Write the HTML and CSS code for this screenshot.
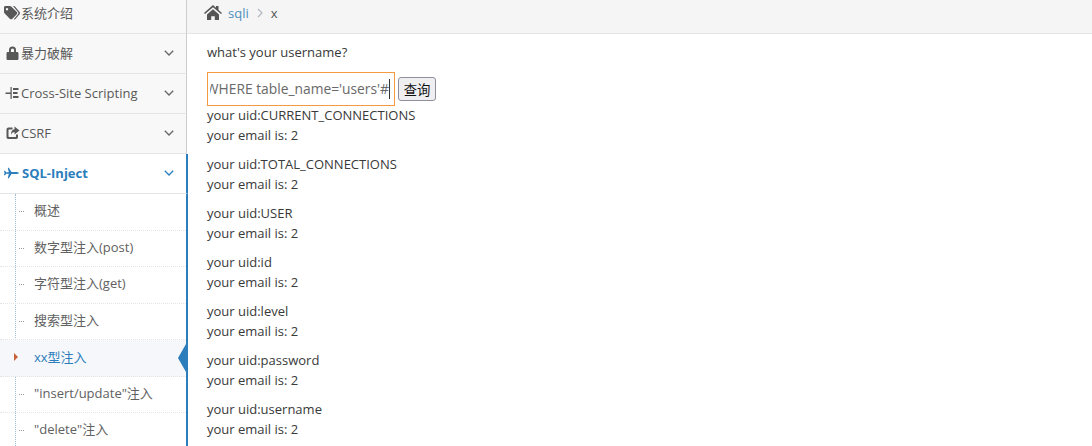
FILE: index.html
```html
<!DOCTYPE html>
<html lang="en">
<head>
  <meta charset="UTF-8" />
  <title>sqli</title>
  <link rel="stylesheet" href="styles.css">
</head>
<body>
  <div class="page">
    <ul class="sidebar">
      <li class="nav-item first">
        <svg class="nav-icon tag-icon" viewBox="0 0 16 14"><path d="M0 1.500C0 .7.600 0 1.500 0H6c.5 0 .9.200 1.200.5l5.600 5.600c.6.600.6 1.500 0 2.100l-4.700 4.700c-.6.600-1.500.6-2.100 0L.5 7.300C.2 7 0 6.600 0 6.100zM3 2a1.200 1.200 0 1 0 .01 0z" fill-rule="evenodd"/><path d="M9 0h1c.4 0 .8.200 1 .5l4.600 5.600c.5.600.5 1.500 0 2.100l-4.200 4.900c-.5.500-1.200.5-1.700.1l4.300-5c.5-.6.5-1.500 0-2.100z"/></svg>
        <span class="nav-text">系统介绍</span>
      </li>
      <li class="nav-item">
        <svg class="nav-icon" viewBox="0 0 14 14"><path d="M3.500 6V4a3.500 3.500 0 0 1 7 0v2h1.200c.7 0 1.300.6 1.300 1.300v5.400c0 .7-.6 1.300-1.300 1.300H2.300C1.600 14 1 13.400 1 12.700V7.300C1 6.600 1.600 6 2.300 6zM5.400 6h3.200V4a1.600 1.600 0 0 0-3.200 0z" fill-rule="evenodd"/></svg>
        <span class="nav-text">暴力破解</span>
        <svg class="chevron" viewBox="0 0 10 6"><path d="M.8.800 5 5 9.200.8"/></svg>
      </li>
      <li class="nav-item">
        <svg class="nav-icon" viewBox="0 0 14 14"><path d="M5 1h1.200v12H5V8H0V6.500h5zM7.500 2H13v2H7.500zM7.500 6H12v2H7.500zM7.500 10H13v2H7.500z"/></svg>
        <span class="nav-text">Cross-Site Scripting</span>
        <svg class="chevron" viewBox="0 0 10 6"><path d="M.8.800 5 5 9.200.8"/></svg>
      </li>
      <li class="nav-item">
        <svg class="nav-icon" viewBox="0 0 14 14"><path d="M3 1.500h4v2H3.500c-.3 0-.5.200-.5.5v6.500c0 .3.200.5.500.5h6.500c.3 0 .5-.2.500-.5V8.500h2v2.800c0 1-.8 1.700-1.700 1.700H2.700C1.700 13 1 12.300 1 11.300V3.500C1 2.400 1.900 1.500 3 1.500z"/><path d="M9 .5l5 4-5 4V6C7.300 6 6.200 6.800 5.500 9c-.3-3.500 1.200-5.500 3.500-5.800z"/></svg>
        <span class="nav-text">CSRF</span>
        <svg class="chevron" viewBox="0 0 10 6"><path d="M.8.800 5 5 9.200.8"/></svg>
      </li>
      <li class="nav-item open">
        <svg class="nav-icon" viewBox="0 0 14 10"><path d="M0 3h1l1 1.200h2.500L3.500 0h1L7 4h3.500C12.500 4 14 4.500 14 5s-1.500 1-3.500 1H7l-2.500 4h-1l1-4.200H2L1 7H0l.5-2z"/></svg>
        <span class="nav-text">SQL-Inject</span>
        <svg class="chevron" viewBox="0 0 10 6"><path d="M.8.800 5 5 9.200.8"/></svg>
      </li>
      <li>
        <ul class="submenu">
          <li class="sub-item">概述</li>
          <li class="sub-item">数字型注入(post)</li>
          <li class="sub-item">字符型注入(get)</li>
          <li class="sub-item">搜索型注入</li>
          <li class="sub-item current">xx型注入</li>
          <li class="sub-item">"insert/update"注入</li>
          <li class="sub-item">"delete"注入</li>
        </ul>
      </li>
    </ul>

    <div class="main">
      <div class="breadcrumb">
        <svg class="home-icon" viewBox="0 0 18 15"><path d="M9 0l3 2.700V1h2.500v3.900L18 8l-1 1.100L9 2.200 1 9.100 0 8z"/><path d="M3 9.500 9 4.200l6 5.300V15h-4.200v-3.800H7.200V15H3z"/></svg>
        <a class="crumb-link">sqli</a>
        <svg class="crumb-sep" viewBox="0 0 6 10"><path d="M1 1l4 4-4 4"/></svg>
        <span class="crumb-now">x</span>
      </div>
      <div class="content">
        <p class="question">what's your username?</p>
        <form class="query-form">
          <div class="fake-input"><div class="fake-clip"><span class="fake-value">WHERE table_name='users'#</span></div></div>
          <button type="button" class="query-btn">查询</button>
        </form>
        <p class="row">your uid:CURRENT_CONNECTIONS<br>your email is: 2</p>
        <p class="row">your uid:TOTAL_CONNECTIONS<br>your email is: 2</p>
        <p class="row">your uid:USER<br>your email is: 2</p>
        <p class="row">your uid:id<br>your email is: 2</p>
        <p class="row">your uid:level<br>your email is: 2</p>
        <p class="row">your uid:password<br>your email is: 2</p>
        <p class="row">your uid:username<br>your email is: 2</p>
      </div>
    </div>
  </div>
</body>
</html>
```

FILE: styles.css
```css
* {
  box-sizing: border-box;
}

html,
body {
  margin: 0;
  height: 446px;
  overflow: hidden;
}

body {
  font-family: "Open Sans", "Noto Sans CJK SC", sans-serif;
  font-size: 13px;
  line-height: 20px;
  color: #393939;
  background: #fff;
}

ul {
  list-style: none;
  margin: 0;
  padding: 0;
}

.page {
  display: flex;
  height: 446px;
  overflow: hidden;
}

.sidebar {
  position: relative;
  z-index: 1;
  width: 187px;
  flex: none;
  margin: -6px 0 0;
}

.nav-item {
  display: flex;
  align-items: center;
  height: 40px;
  padding: 0 0 2px 5px;
  background: #f8f8f8;
  color: #585858;
  border-bottom: 1px solid #e5e5e5;
  border-right: 1px solid #ccc;
}

.nav-icon {
  width: 15px;
  height: 14px;
  flex: none;
  fill: #585858;
}

.tag-icon {
  width: 16px;
  margin-left: -1px;
}

.nav-text {
  margin-left: 1px;
}

.chevron {
  width: 10px;
  height: 6px;
  margin-left: auto;
  margin-right: 12px;
  fill: none;
  stroke: #666;
  stroke-width: 1.3;
}

.nav-item.open {
  background: #fff;
  color: #2b7dbc;
  font-weight: 700;
  margin-right: -1px;
  border-right: 2px solid #2b7dbc;
  padding-left: 4px;
}

.nav-item.open .nav-icon {
  fill: #2b7dbc;
}

.nav-item.open .nav-text {
  margin-left: 3px;
}

.nav-item.open .chevron {
  stroke: #2b7dbc;
}

.submenu {
  position: relative;
  background: #fff;
  margin-right: -1px;
  border-right: 2px solid #2b7dbc;
}

.submenu::before {
  content: "";
  position: absolute;
  left: 15px;
  top: 0;
  bottom: 0;
  border-left: 1px dotted #9dbdd6;
}

.sub-item {
  position: relative;
  height: 36.5px;
  line-height: 33px;
  padding-left: 34px;
  color: #616161;
  border-bottom: 1px dotted #e4e4e4;
}

.sub-item::before {
  content: "";
  position: absolute;
  left: 19px;
  top: 17px;
  width: 5px;
  border-top: 1px dotted #9a9a9a;
}

.sub-item.current {
  background: #f5f7fa;
  color: #2b7dbc;
  line-height: 35px;
}

.sub-item.current::before {
  left: 14px;
  top: 13px;
  width: 0;
  border: 0;
  border-left: 4px solid #c86139;
  border-top: 4px solid transparent;
  border-bottom: 4px solid transparent;
}

.sub-item.current::after {
  content: "";
  position: absolute;
  right: 0;
  top: 4px;
  border: 14px solid transparent;
  border-left: 0;
  border-right: 8px solid #2b7dbc;
}

.main {
  flex: 1;
  min-width: 0;
}

.breadcrumb {
  display: flex;
  align-items: center;
  height: 34px;
  padding: 0 0 8px 17px;
  background: #f5f5f5;
  border-bottom: 1px solid #e5e5e5;
}

.home-icon {
  width: 18px;
  height: 15px;
  fill: #555;
}

.crumb-link {
  margin-left: 6px;
  color: #4c8fbd;
}

.crumb-sep {
  width: 6px;
  height: 10px;
  margin: 0 8px;
  fill: none;
  stroke: #b2b6bf;
  stroke-width: 1.2;
}

.crumb-now {
  color: #555;
}

.content {
  padding: 8px 0 0 20px;
}

.question {
  margin: 0 0 10px;
}

.query-form {
  display: flex;
  align-items: flex-start;
  height: 33px;
}

.fake-input {
  width: 188px;
  height: 34px;
  border: 1px solid #f59942;
  padding: 0 4px 0 2px;
}

.fake-clip {
  height: 100%;
  overflow: hidden;
  display: flex;
  justify-content: flex-end;
  align-items: center;
  font-size: 13.8px;
  color: #696969;
  white-space: nowrap;
}

.fake-value {
  flex: none;
  border-right: 1px solid #333;
  line-height: 20px;
}

.query-btn {
  margin: 5px 0 0 3px;
  width: 38px;
  height: 24px;
  padding: 0;
  font: 13.333px "Noto Sans CJK SC", sans-serif;
  color: #111;
  background: #efeff1;
  border: 1px solid #8f8f9d;
  border-radius: 3px;
}

.row {
  margin: 0 0 9px;
}

.row:last-child {
  margin-bottom: 0;
}
```
